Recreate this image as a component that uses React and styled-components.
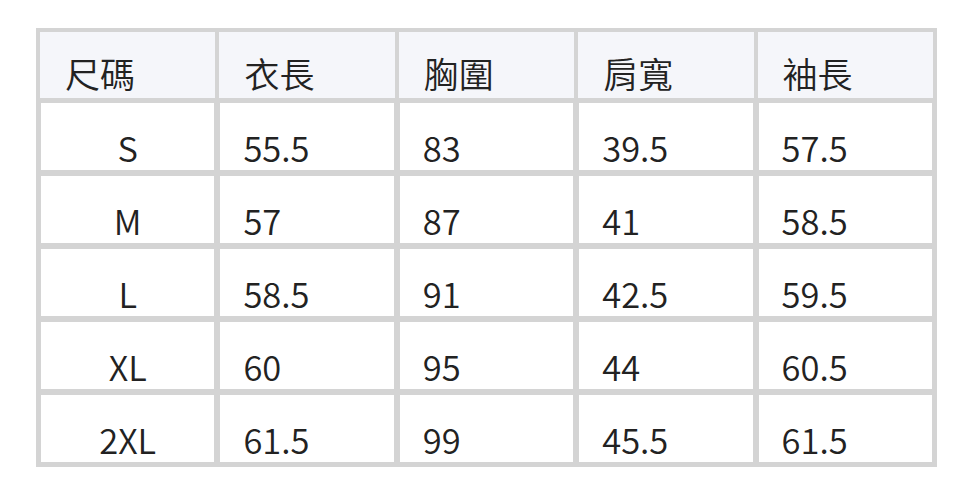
import React from "react";
import styled, { createGlobalStyle } from "styled-components";

const Global = createGlobalStyle`
  html, body { margin: 0; padding: 0; background: #ffffff; }
  body { font-family: "Noto Sans CJK TC", "Noto Sans", sans-serif; }
`;

const Page = styled.div`
  padding: 28px 35px 0 36px;
`;

const Table = styled.div`
  display: grid;
  grid-template-columns: repeat(5, 1fr);
  grid-template-rows: 66px repeat(5, 69px);
  gap: 4px;
  padding: 4px;
  background: #d4d4d4;
  width: 901px;
  box-sizing: border-box;
`;

const HeadCell = styled.div`
  background: #f5f6fa;
  display: flex;
  align-items: flex-end;
  padding: 0 0 8px 25px;
  font-size: 35px;
  font-weight: 350;
  line-height: 1;
  color: #222222;
`;

const Cell = styled.div`
  background: #ffffff;
  border: 1.5px solid #d4d4d4;
  box-sizing: border-box;
  display: flex;
  align-items: flex-end;
  justify-content: ${(p) => (p.$center ? "center" : "flex-start")};
  padding: ${(p) => (p.$center ? "0 0 6px 0" : "0 0 6px 23px")};
  font-size: 34.5px;
  font-weight: 350;
  line-height: 1;
  color: #222222;
`;

const headers = ["尺碼", "衣長", "胸圍", "肩寬", "袖長"];
const rows = [
  ["S", "55.5", "83", "39.5", "57.5"],
  ["M", "57", "87", "41", "58.5"],
  ["L", "58.5", "91", "42.5", "59.5"],
  ["XL", "60", "95", "44", "60.5"],
  ["2XL", "61.5", "99", "45.5", "61.5"],
];

export default function App() {
  return (
    <>
      <Global />
      <Page>
        <Table>
          {headers.map((h) => (
            <HeadCell key={h}>{h}</HeadCell>
          ))}
          {rows.map((r) =>
            r.map((v, i) => (
              <Cell key={r[0] + i} $center={i === 0}>
                {v}
              </Cell>
            ))
          )}
        </Table>
      </Page>
    </>
  );
}
